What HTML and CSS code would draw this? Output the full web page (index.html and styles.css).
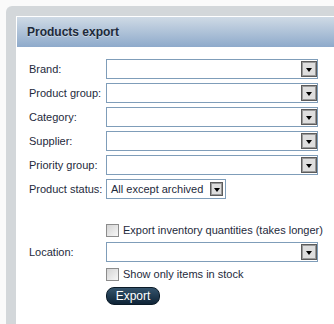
FILE: index.html
```html
<!DOCTYPE html>
<html lang="en">
<head>
    <meta charset="UTF-8">
    <title>Products export</title>
    <link rel="stylesheet" href="styles.css">
</head>
<body>
    <div class="panel">
        <div class="box">
            <div class="box-header">Products export</div>

            <div class="form">
                <div class="row">
                    <label>Brand:</label>
                    <div class="select"><span class="select-btn"></span></div>
                </div>
                <div class="row">
                    <label>Product group:</label>
                    <div class="select"><span class="select-btn"></span></div>
                </div>
                <div class="row">
                    <label>Category:</label>
                    <div class="select"><span class="select-btn"></span></div>
                </div>
                <div class="row">
                    <label>Supplier:</label>
                    <div class="select"><span class="select-btn"></span></div>
                </div>
                <div class="row">
                    <label>Priority group:</label>
                    <div class="select"><span class="select-btn"></span></div>
                </div>
                <div class="row">
                    <label>Product status:</label>
                    <div class="select select-small">
                        <span class="select-value">All except archived</span>
                        <span class="select-btn"></span>
                    </div>
                </div>

                <div class="spacer"></div>

                <div class="check-row">
                    <span class="checkbox"></span>
                    <span>Export inventory quantities (takes longer)</span>
                </div>
                <div class="row">
                    <label>Location:</label>
                    <div class="select"><span class="select-btn"></span></div>
                </div>
                <div class="check-row">
                    <span class="checkbox"></span>
                    <span>Show only items in stock</span>
                </div>
                <div class="button-row">
                    <button class="btn">Export</button>
                </div>
            </div>
        </div>
    </div>
</body>
</html>
```

FILE: styles.css
```css
* {
    margin: 0;
    padding: 0;
    box-sizing: border-box;
}

body {
    background: #fafafa;
    font-family: "Liberation Sans", Arial, sans-serif;
    font-size: 11px;
    color: #1e2a3c;
    overflow: hidden;
}

.panel {
    margin: 6px 0 0 6px;
    width: 400px;
    height: 400px;
    background: #d3d7da;
    border-radius: 6px;
    padding: 10px;
}

.box {
    background: #fff;
    padding: 1px;
    height: 100%;
}

.box-header {
    height: 30px;
    padding-left: 10px;
    display: flex;
    align-items: center;
    background: linear-gradient(#cfdae5, #8eaacb);
    font-size: 12px;
    font-weight: bold;
    color: #1d2a3a;
    text-shadow: 0 1px 0 rgba(255,255,255,0.4);
}

.form {
    padding: 10px 0 0 12px;
}

.row {
    display: flex;
    align-items: center;
    height: 24px;
}

.row label {
    width: 77px;
    white-space: nowrap;
}

.select {
    width: 212px;
    height: 20px;
    border: 1px solid #7f9db9;
    background: #fff;
    display: flex;
    align-items: center;
    justify-content: flex-end;
}

.select-btn {
    width: 16px;
    height: 16px;
    background: #dedede;
    border: 1px solid #5c5c5c;
    box-shadow: inset 0 0 0 1px #9a9a9a;
    position: relative;
}

.select-btn::after {
    content: "";
    position: absolute;
    left: 4px;
    top: 6px;
    border-left: 3.5px solid transparent;
    border-right: 3.5px solid transparent;
    border-top: 4px solid #000;
}

.select-small {
    width: 120px;
    justify-content: space-between;
    padding: 0 2px 0 4px;
}

.select-small .select-btn {
    width: 13px;
    height: 14px;
}

.select-small .select-btn::after {
    left: 2.5px;
    top: 5px;
}

.select-value {
    white-space: nowrap;
}

.spacer {
    height: 19px;
}

.check-row {
    display: flex;
    align-items: center;
    gap: 4px;
    height: 20px;
    padding-left: 77px;
}

.checkbox {
    width: 13px;
    height: 13px;
    border: 1px solid #8c8c8c;
    background: linear-gradient(135deg, #d4d4d4, #f7f7f7);
}

.button-row {
    padding: 3px 0 0 77px;
}

.btn {
    width: 54px;
    height: 18px;
    border: 1px solid #0b1b28;
    border-radius: 8px;
    background: linear-gradient(#34536c, #0f2437);
    color: #fff;
    font-family: "Liberation Sans", Arial, sans-serif;
    font-size: 12px;
    line-height: 16px;
    cursor: pointer;
}
```
